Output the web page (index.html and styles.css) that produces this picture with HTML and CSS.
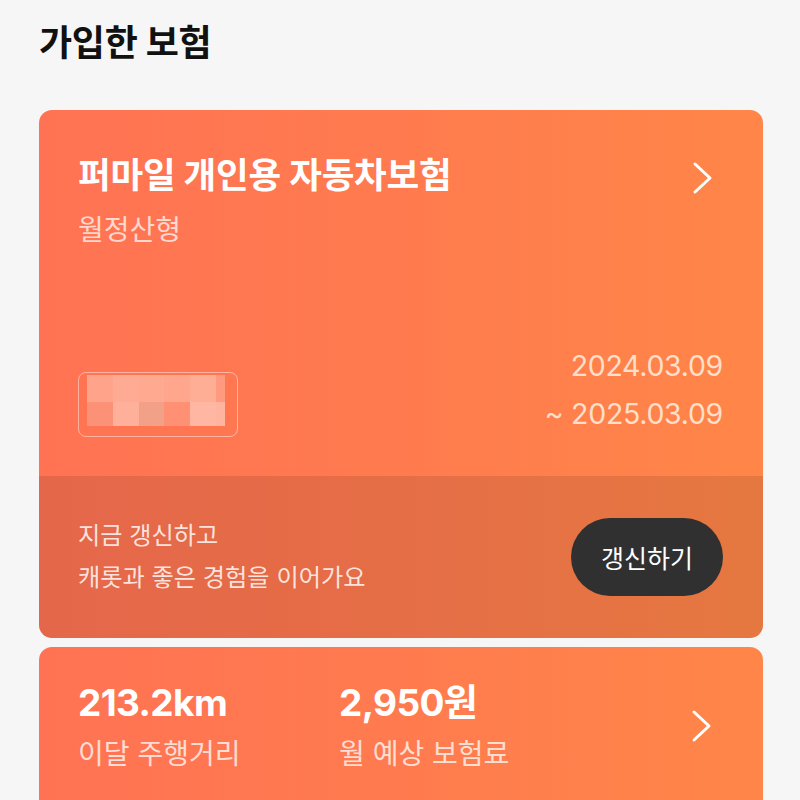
FILE: index.html
```html
<!DOCTYPE html>
<html lang="ko">
<head>
<meta charset="utf-8">
<link rel="stylesheet" href="styles.css">
</head>
<body>
<main class="page">
  <h1 class="heading">가입한 보험</h1>

  <section class="card policy">
    <div class="policy-top">
      <div class="title-row">
        <div>
          <div class="policy-name">퍼마일 개인용 자동차보험</div>
          <div class="policy-type">월정산형</div>
        </div>
        <svg class="chevron" width="22" height="34" viewBox="0 0 22 34" aria-hidden="true"><path d="M3 3 L18 17 L3 31" fill="none" stroke="#fff" stroke-width="3" stroke-linecap="round" stroke-linejoin="round"/></svg>
      </div>
      <div class="info-row">
        <div class="plate">
          <div class="mosaic">
            <span></span><span></span><span></span><span></span><span></span><span></span>
            <span></span><span></span><span></span><span></span><span></span><span></span>
          </div>
        </div>
        <div class="period">
          <div>2024.03.09</div>
          <div>~ 2025.03.09</div>
        </div>
      </div>
    </div>
    <div class="policy-bottom">
      <div class="renew-text">
        <div>지금 갱신하고</div>
        <div>캐롯과 좋은 경험을 이어가요</div>
      </div>
      <button class="renew-btn">갱신하기</button>
    </div>
  </section>

  <section class="card stats">
    <div class="stat">
      <div class="stat-value">213.2km</div>
      <div class="stat-label">이달 주행거리</div>
    </div>
    <div class="stat">
      <div class="stat-value">2,950원</div>
      <div class="stat-label">월 예상 보험료</div>
    </div>
    <svg class="chevron stats-chevron" width="22" height="34" viewBox="0 0 22 34" aria-hidden="true"><path d="M3 3 L18 17 L3 31" fill="none" stroke="#fff" stroke-width="3" stroke-linecap="round" stroke-linejoin="round"/></svg>
  </section>
</main>
</body>
</html>
```

FILE: styles.css
```css
* { box-sizing: border-box; }

html, body {
  margin: 0;
  padding: 0;
  background: #f6f6f6;
  font-family: "Inter", "Noto Sans CJK KR", sans-serif;
  color: #111;
}

.page {
  padding: 0 37px 0 39px;
}

.heading {
  margin: 0;
  padding-top: 20px;
  font-size: 36px;
  line-height: 46px;
  font-weight: 700;
  letter-spacing: -0.3px;
  color: #111;
}

.card {
  border-radius: 13px;
  background: linear-gradient(90deg, #ff7354 0%, #ff7b4f 50%, #ff8648 100%);
  color: #fff;
  overflow: hidden;
}

.policy {
  margin-top: 44px;
  display: flex;
  flex-direction: column;
}

.policy-top {
  height: 366px;
  padding: 44px 40px 38px 39px;
  display: flex;
  flex-direction: column;
  justify-content: space-between;
}

.title-row {
  display: flex;
  justify-content: space-between;
  align-items: flex-start;
}

.policy-name {
  font-size: 35.5px;
  line-height: 44px;
  font-weight: 700;
  letter-spacing: -0.2px;
}

.policy-type {
  margin-top: 14px;
  font-size: 28px;
  line-height: 36px;
  color: rgba(255, 255, 255, 0.72);
}

.chevron {
  display: block;
}

.title-row .chevron {
  margin-top: 7px;
  margin-right: 9px;
}

.info-row {
  display: flex;
  justify-content: space-between;
  align-items: flex-end;
}

.plate {
  width: 160px;
  height: 65px;
  margin-bottom: 1px;
  border: 1.5px solid rgba(255, 255, 255, 0.45);
  border-radius: 8px;
  padding: 2px 0 0 8px;
}

.mosaic {
  display: grid;
  grid-template-columns: 26px 26px 25px 26px 26px 9px;
  grid-template-rows: 27px 24px;
}

.mosaic span:nth-child(1) { background: #ffa38b; }
.mosaic span:nth-child(2) { background: #ffab93; }
.mosaic span:nth-child(3) { background: #ffa991; }
.mosaic span:nth-child(4) { background: #ffa68d; }
.mosaic span:nth-child(5) { background: #ffae96; }
.mosaic span:nth-child(6) { background: #ff9a80; }
.mosaic span:nth-child(7) { background: #fb9277; }
.mosaic span:nth-child(8) { background: #ffb09a; }
.mosaic span:nth-child(9) { background: #f3a088; }
.mosaic span:nth-child(10) { background: #ff9073; }
.mosaic span:nth-child(11) { background: #ffb7a3; }
.mosaic span:nth-child(12) { background: #ffb49f; }

.period {
  text-align: right;
  font-size: 28.5px;
  line-height: 48px;
  color: rgba(255, 244, 232, 0.82);
  letter-spacing: -0.3px;
}

.policy-bottom {
  height: 162px;
  padding: 0 40px 0 39px;
  background: rgba(0, 0, 0, 0.1);
  display: flex;
  justify-content: space-between;
  align-items: center;
}

.renew-text {
  font-size: 24.2px;
  line-height: 42px;
  color: rgba(255, 255, 255, 0.82);
}

.renew-btn {
  width: 152px;
  height: 78px;
  border: none;
  border-radius: 39px;
  background: #303030;
  color: #fff;
  font-family: inherit;
  font-size: 25px;
  padding: 0;
}

.stats {
  margin-top: 9px;
  height: 170px;
  padding: 34px 50px 0 39px;
  display: flex;
  align-items: flex-start;
}

.stat {
  width: 261px;
}

.stat-value {
  font-size: 37px;
  line-height: 44px;
  font-weight: 700;
  letter-spacing: -0.6px;
}

.stat-label {
  margin-top: 11px;
  font-size: 28px;
  line-height: 36px;
  color: rgba(255, 255, 255, 0.75);
}

.stats-chevron {
  margin-left: auto;
  margin-top: 28px;
}
```
